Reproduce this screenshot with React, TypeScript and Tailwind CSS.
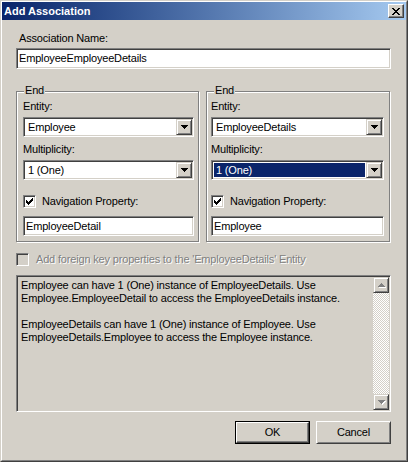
import React from "react";

function Pix({ rows, color, scale = 1 }: { rows: string[]; color: string; scale?: number }) {
  const w = rows[0].length;
  const h = rows.length;
  const rects: React.ReactElement[] = [];
  rows.forEach((r, y) =>
    r.split("").forEach((c, x) => {
      if (c === "X") rects.push(<rect key={`${x}-${y}`} x={x} y={y} width={1} height={1} fill={color} />);
    })
  );
  return (
    <svg width={w * scale} height={h * scale} viewBox={`0 0 ${w} ${h}`} shapeRendering="crispEdges" className="block">
      {rects}
    </svg>
  );
}

const CLOSE = ["XX....XX", ".XX..XX.", "..XXXX..", "...XX...", "..XXXX..", ".XX..XX.", "XX....XX"];
const CHECK = ["......X", ".....XX", "X...XXX", "XX.XXX.", "XXXXX..", ".XXX...", "..X...."];
const DOWN = ["XXXXXXX", ".XXXXX.", "..XXX..", "...X..."];
const UP = ["...X...", "..XXX..", ".XXXXX.", "XXXXXXX"];

function DropBtn() {
  return (
    <div className="w-[16px] h-[16px] shrink-0 bg-[#d4d0c8] border border-t-[#d4d0c8] border-l-[#d4d0c8] border-r-[#404040] border-b-[#404040] shadow-[inset_1px_1px_0_#ffffff,inset_-1px_-1px_0_#808080] flex items-center justify-center">
      <Pix rows={DOWN} color="#000000" />
    </div>
  );
}

function Combo({ value, selected = false }: { value: string; selected?: boolean }) {
  return (
    <div className="h-[20px] w-full bg-white border border-t-[#808080] border-l-[#808080] border-r-white border-b-white shadow-[inset_1px_1px_0_#404040,inset_-1px_-1px_0_#d4d0c8] p-[1px] flex">
      {selected ? (
        <div className="flex-1 m-[1px] bg-[#0a246a] text-white flex items-center pl-[2px]">{value}</div>
      ) : (
        <div className="flex-1 flex items-center pl-[3px]">{value}</div>
      )}
      <DropBtn />
    </div>
  );
}

function TextBox({ value, h = "h-[20px]" }: { value: string; h?: string }) {
  return (
    <div className={`${h} w-full bg-white border border-t-[#808080] border-l-[#808080] border-r-white border-b-white shadow-[inset_1px_1px_0_#404040,inset_-1px_-1px_0_#d4d0c8] flex items-center pl-[2px]`}>
      {value}
    </div>
  );
}

function CheckBox({ checked, disabled = false }: { checked: boolean; disabled?: boolean }) {
  return (
    <div
      className={`w-[13px] h-[13px] shrink-0 border border-t-[#808080] border-l-[#808080] border-r-white border-b-white shadow-[inset_1px_1px_0_#404040,inset_-1px_-1px_0_#d4d0c8] flex items-center justify-center ${
        disabled ? "bg-[#d4d0c8]" : "bg-white"
      }`}
    >
      {checked && <Pix rows={CHECK} color="#000000" />}
    </div>
  );
}

function Group({ entity, mult, nav, selected, className }: { entity: string; mult: string; nav: string; selected?: boolean; className: string }) {
  return (
    <div className={`relative border border-[#808080] shadow-[inset_1px_1px_0_#ffffff,1px_1px_0_#ffffff] pt-[8px] pb-[5px] flex flex-col ${className}`}>
      <span className="absolute left-[7px] top-[-8px] bg-[#d4d0c8] px-[1px] leading-[13px]">End</span>
      <div className="h-[13px] leading-[13px]">Entity:</div>
      <div className="mt-[4px]">
        <Combo value={entity} />
      </div>
      <div className="mt-[6px] h-[13px] leading-[13px]">Multiplicity:</div>
      <div className="mt-[4px]">
        <Combo value={mult} selected={selected} />
      </div>
      <div className="mt-[15px] h-[13px] flex items-center gap-[6px]">
        <CheckBox checked />
        <span>Navigation Property:</span>
      </div>
      <div className="mt-[8px]">
        <TextBox value={nav} />
      </div>
    </div>
  );
}

function Button({ label, isDefault = false }: { label: string; isDefault?: boolean }) {
  if (isDefault) {
    return (
      <div className="w-[75px] h-[23px] border border-black">
        <div className="w-full h-full bg-[#d4d0c8] border border-t-white border-l-white border-r-[#404040] border-b-[#404040] shadow-[inset_-1px_-1px_0_#808080] flex items-center justify-center">
          {label}
        </div>
      </div>
    );
  }
  return (
    <div className="w-[75px] h-[23px] bg-[#d4d0c8] border border-t-white border-l-white border-r-[#404040] border-b-[#404040] shadow-[inset_1px_1px_0_#d4d0c8,inset_-1px_-1px_0_#808080] flex items-center justify-center">
      {label}
    </div>
  );
}

function ScrollBtn({ rows }: { rows: string[] }) {
  return (
    <div className="w-[16px] h-[16px] shrink-0 bg-[#d4d0c8] border border-t-[#d4d0c8] border-l-[#d4d0c8] border-r-[#404040] border-b-[#404040] shadow-[inset_1px_1px_0_#ffffff,inset_-1px_-1px_0_#808080] flex items-center justify-center">
      <div className="relative">
        <div className="absolute left-[1px] top-[1px]">
          <Pix rows={rows} color="#ffffff" />
        </div>
        <div className="relative">
          <Pix rows={rows} color="#808080" />
        </div>
      </div>
    </div>
  );
}

export default function App() {
  return (
    <div className="w-[408px] h-[462px] bg-[#d4d0c8] border border-t-[#d4d0c8] border-l-[#d4d0c8] border-r-[#404040] border-b-[#404040] font-['Liberation_Sans',Arial,sans-serif] text-[11px] leading-[13px] text-black select-none">
      <div className="h-full border border-t-white border-l-white border-r-[#808080] border-b-[#808080] flex flex-col">
        <div className="h-[18px] shrink-0 bg-linear-to-r from-[#0a246a] to-[#a6caf0] flex items-center justify-between pl-[2px] pr-[2px]">
          <span className="text-white font-bold">Add Association</span>
          <div className="w-[16px] h-[14px] bg-[#d4d0c8] border border-t-white border-l-white border-r-[#404040] border-b-[#404040] shadow-[inset_-1px_-1px_0_#808080] flex items-center justify-center">
            <Pix rows={CLOSE} color="#000000" />
          </div>
        </div>

        <div className="flex flex-col pl-[14px] pr-[15px] tracking-[-0.17px]">
          <div className="mt-[12px] h-[13px] pl-[3px]">Association Name:</div>
          <div className="mt-[3px]">
            <TextBox value="EmployeeEmployeeDetails" h="h-[21px]" />
          </div>

          <div className="mt-[22px] flex gap-[7px]">
            <Group className="w-[183px] pl-[6px] pr-[4px]" entity="Employee" mult="1 (One)" nav="EmployeeDetail" />
            <Group className="w-[184px] pl-[4px] pr-[5px]" entity="EmployeeDetails" mult="1 (One)" nav="Employee" selected />
          </div>

          <div className="mt-[11px] h-[13px] flex items-center gap-[7px]">
            <CheckBox checked={false} disabled />
            <span className="text-[#808080] [text-shadow:1px_1px_0_#ffffff]">Add foreign key properties to the 'EmployeeDetails' Entity</span>
          </div>

          <div className="mt-[9px] h-[137px] border border-t-[#808080] border-l-[#808080] border-r-white border-b-white shadow-[inset_1px_1px_0_#404040,inset_-1px_-1px_0_#d4d0c8] p-[1px] flex">
            <div className="flex-1 pl-[3px] pt-[2px]">
              <div>Employee can have 1 (One) instance of EmployeeDetails. Use</div>
              <div>Employee.EmployeeDetail to access the EmployeeDetails instance.</div>
              <div className="h-[13px]"></div>
              <div>EmployeeDetails can have 1 (One) instance of Employee. Use</div>
              <div>EmployeeDetails.Employee to access the Employee instance.</div>
            </div>
            <div className="w-[16px] flex flex-col">
              <ScrollBtn rows={UP} />
              <div className="flex-1 bg-[image:repeating-conic-gradient(#ffffff_0_25%,#d4d0c8_0_50%)] bg-[length:2px_2px]"></div>
              <ScrollBtn rows={DOWN} />
            </div>
          </div>

          <div className="mt-[9px] flex justify-end gap-[6px]">
            <Button label="OK" isDefault />
            <Button label="Cancel" />
          </div>
        </div>
      </div>
    </div>
  );
}
